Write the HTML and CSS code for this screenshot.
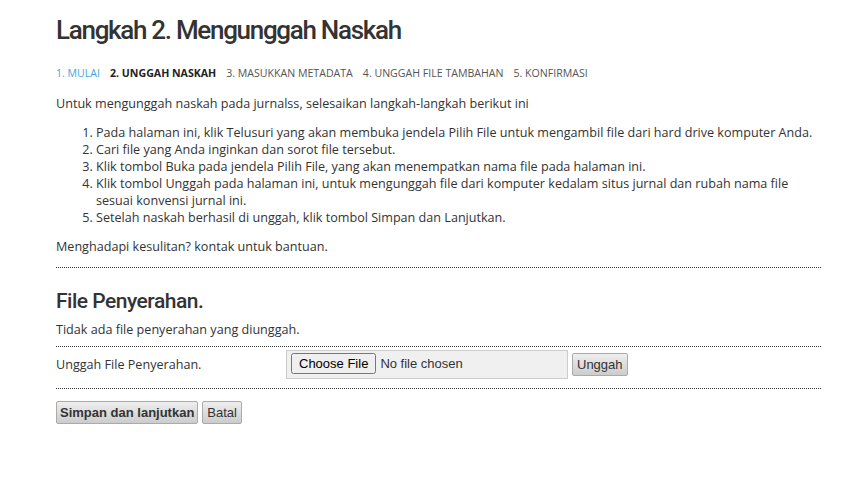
FILE: index.html
```html
<!DOCTYPE html>
<html lang="id">
<head>
    <meta charset="UTF-8">
    <title>Langkah 2. Mengunggah Naskah</title>
    <link rel="stylesheet" href="styles.css">
</head>
<body>

<div class="main">
    <h1 class="page-title">Langkah 2. Mengunggah Naskah</h1>

    <!-- langkah-langkah pengiriman -->
    <ul class="steps">
        <li class="done">1. Mulai</li>
        <li class="current">2. Unggah Naskah</li>
        <li>3. Masukkan Metadata</li>
        <li>4. Unggah File Tambahan</li>
        <li>5. Konfirmasi</li>
    </ul>

    <p>Untuk mengunggah naskah pada jurnalss, selesaikan langkah-langkah berikut ini</p>

    <ol class="instructions">
        <li>Pada halaman ini, klik Telusuri yang akan membuka jendela Pilih File untuk mengambil file dari hard drive komputer Anda.</li>
        <li>Cari file yang Anda inginkan dan sorot file tersebut.</li>
        <li>Klik tombol Buka pada jendela Pilih File, yang akan menempatkan nama file pada halaman ini.</li>
        <li>Klik tombol Unggah pada halaman ini, untuk mengunggah file dari komputer kedalam situs jurnal dan rubah nama file sesuai konvensi jurnal ini.</li>
        <li>Setelah naskah berhasil di unggah, klik tombol Simpan dan Lanjutkan.</li>
    </ol>

    <p>Menghadapi kesulitan? kontak untuk bantuan.</p>

    <div class="separator"></div>

    <!-- file penyerahan -->
    <h2 class="section-title">File Penyerahan.</h2>
    <p class="note">Tidak ada file penyerahan yang diunggah.</p>

    <div class="separator"></div>
    <div class="upload-row">
        <label class="upload-label" for="submissionFile">Unggah File Penyerahan.</label>
        <input type="file" id="submissionFile" class="file-input" name="submissionFile">
        <button class="button">Unggah</button>
    </div>
    <div class="separator"></div>

    <div class="actions">
        <button class="button default">Simpan dan lanjutkan</button>
        <button class="button">Batal</button>
    </div>
</div>

</body>
</html>
```

FILE: styles.css
```css
/* halaman umum */
body {
    font-family: 'Open Sans', sans-serif;
    font-size: 12.6px;
    color: #333;
    background-color: #fff;
    margin: 0;
    padding: 0;
}

.main {
    width: 765px;
    margin-left: 56px;
    padding-top: 14px;
}

.page-title {
    font-family: Roboto, sans-serif;
    font-size: 26px;
    font-weight: 500;
    letter-spacing: -1.3px;
    color: #333;
    margin: 0 0 20px;
    line-height: 32px;
}

/* langkah */
.steps {
    list-style: none;
    margin: 0 0 15px;
    padding: 0;
    display: flex;
    gap: 10px;
    font-size: 10.6px;
    text-transform: uppercase;
    color: #555;
}

.steps .done {
    color: #45a6dd;
}

.steps .current {
    color: #222;
    font-weight: bold;
}

p {
    margin: 0 0 12px;
    line-height: 17px;
}

.instructions {
    margin: 0 0 12px;
    padding-left: 40px;
    line-height: 17px;
}

.separator {
    border-top: 1px dotted #333;
}

.section-title {
    font-family: Roboto, sans-serif;
    font-size: 21px;
    font-weight: 500;
    letter-spacing: -0.5px;
    color: #333;
    margin: 20px 0 7px;
    line-height: 26px;
}

.note {
    margin-bottom: 8px;
}

/* baris unggah */
.upload-row {
    display: flex;
    align-items: center;
    padding: 3px 0 9px;
}

.upload-label {
    width: 230px;
}

.file-input {
    width: 282px;
    height: 29px;
    box-sizing: border-box;
    background-color: #f0f0f0;
    border: 1px solid #ccc;
    padding: 2px 4px;
    font-family: Arial, 'Liberation Sans', sans-serif;
    font-size: 13px;
    color: #333;
}

.button {
    font-family: Arial, 'Liberation Sans', sans-serif;
    font-size: 13px;
    color: #333;
    background: linear-gradient(#eee, #ccc);
    border: 1px solid #aaa;
    border-radius: 2px;
    padding: 3px 4px;
    margin-left: 4px;
    cursor: pointer;
}

.button.default {
    font-weight: bold;
    margin-left: 0;
    padding: 3px 3px;
}

.actions {
    margin-top: 12px;
    display: flex;
}
```
